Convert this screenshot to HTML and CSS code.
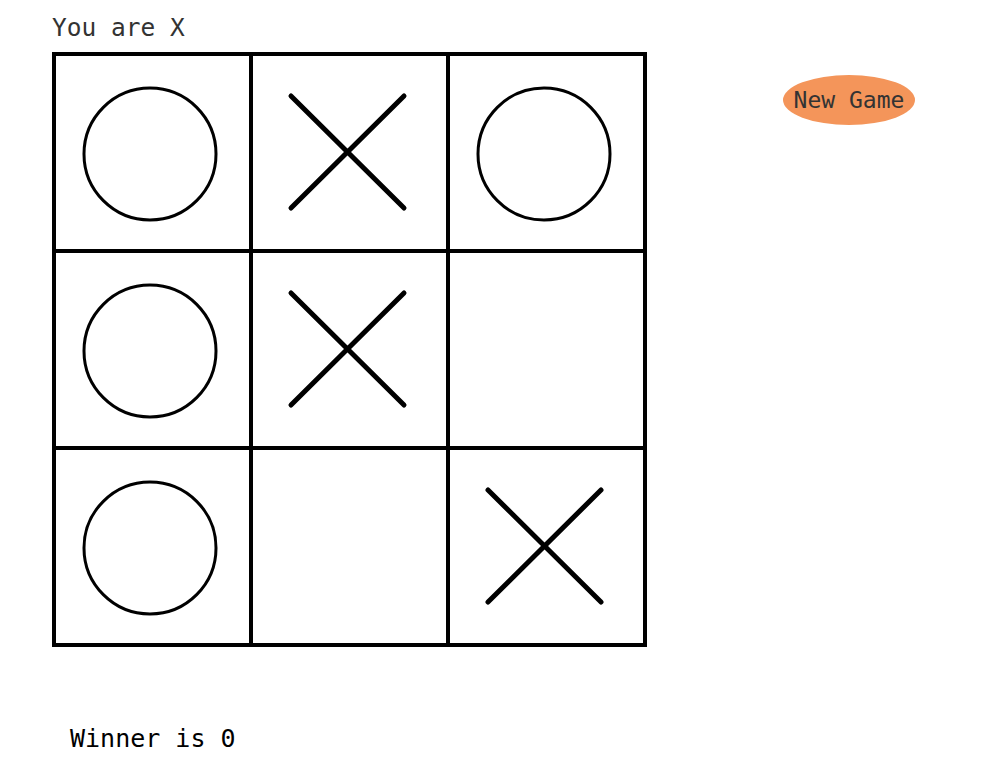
FILE: index.html
```html
<!DOCTYPE html>
<html lang="en">
<head>
  <meta charset="UTF-8" />
  <title>Tic Tac Toe</title>
  <link rel="stylesheet" href="styles.css">
</head>
<body>
  <div class="game">
    <div class="left">
      <div class="player">You are X</div>
      <div class="board">
        <div class="cell"><svg viewBox="0 0 193 193"><circle cx="94" cy="98" r="66" /></svg></div>
        <div class="cell"><svg viewBox="0 0 193 193"><line x1="38" y1="40" x2="151" y2="152" /><line x1="151" y1="40" x2="38" y2="152" /></svg></div>
        <div class="cell"><svg viewBox="0 0 193 193"><circle cx="94" cy="98" r="66" /></svg></div>

        <div class="cell"><svg viewBox="0 0 193 193"><circle cx="94" cy="98" r="66" /></svg></div>
        <div class="cell"><svg viewBox="0 0 193 193"><line x1="38" y1="40" x2="151" y2="152" /><line x1="151" y1="40" x2="38" y2="152" /></svg></div>
        <div class="cell"></div>

        <div class="cell"><svg viewBox="0 0 193 193"><circle cx="94" cy="98" r="66" /></svg></div>
        <div class="cell"></div>
        <div class="cell"><svg viewBox="0 0 193 193"><line x1="38" y1="40" x2="151" y2="152" /><line x1="151" y1="40" x2="38" y2="152" /></svg></div>
      </div>
    </div>
    <button class="new-game">New Game</button>
  </div>
  <div class="winner">Winner is 0</div>
</body>
</html>
```

FILE: styles.css
```css
body {
  margin: 0;
  background: #fff;
  font-family: 'DejaVu Sans Mono', monospace;
}

.game {
  display: flex;
  align-items: flex-start;
  padding: 14px 0 0 52px;
}

.player {
  font-size: 24.5px;
  color: #333;
  line-height: 28px;
  height: 38px;
}

.board {
  display: grid;
  grid-template-columns: repeat(3, 193px);
  grid-template-rows: repeat(3, 193px);
  gap: 4px;
  padding: 4px;
  background: #000;
  width: max-content;
}

.cell {
  background: #fff;
}

.cell svg {
  display: block;
  width: 193px;
  height: 193px;
}

.cell circle {
  fill: none;
  stroke: #000;
  stroke-width: 3;
}

.cell line {
  stroke: #000;
  stroke-width: 5;
  stroke-linecap: round;
}

.new-game {
  margin: 61px 0 0 136px;
  width: 132px;
  height: 50px;
  border: none;
  border-radius: 50%;
  background: #f4955a;
  color: #333;
  font-family: 'DejaVu Sans Mono', monospace;
  font-size: 23px;
  padding: 0;
  cursor: pointer;
}

.winner {
  margin: 77px 0 0 70px;
  font-size: 25px;
  color: #000;
}
```
